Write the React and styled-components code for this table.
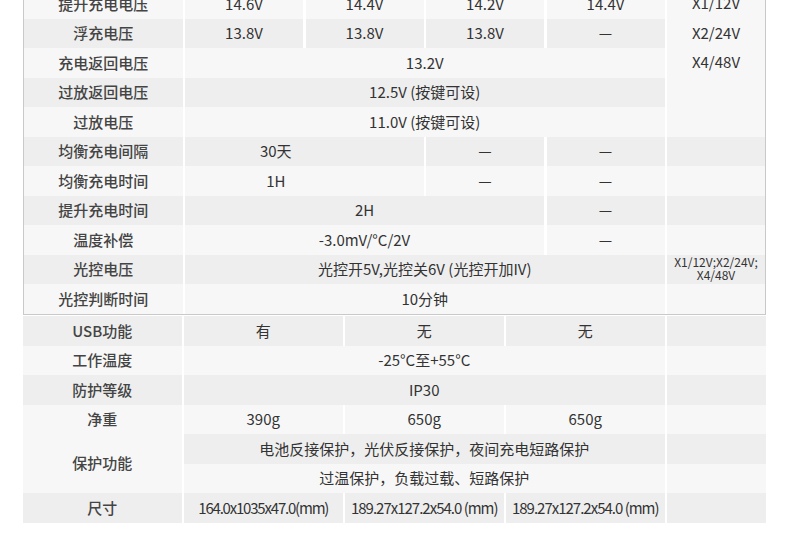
import styled, { createGlobalStyle } from "styled-components";

const GRAY = "#eeeeee";
const LIGHT = "#f7f7f7";

const GlobalStyle = createGlobalStyle`
  html, body {
    margin: 0;
    padding: 0;
    background: #ffffff;
  }
  body {
    font-family: "Noto Sans CJK SC", "Noto Sans", sans-serif;
    font-size: 15px;
    color: #333;
    overflow: hidden;
  }
`;

const Page = styled.div`
  width: 743px;
  margin: -11px 0 0 23px;
`;

const UpperBox = styled.div`
  border: 1px solid #c9c9c9;
  border-top: none;
`;

const Grid = styled.div`
  display: grid;
  grid-template-columns: ${(p) => p.$cols};
  grid-auto-rows: 29.5px;
  column-gap: 2.5px;
`;

const LowerGrid = styled(Grid)`
  margin-top: 1.5px;
`;

const Cell = styled.div`
  display: flex;
  align-items: center;
  justify-content: center;
  text-align: center;
  white-space: nowrap;
  background: ${(p) => (p.$shade ? GRAY : LIGHT)};
  grid-column: ${(p) => (p.$col ? p.$col : "auto")};
  grid-row: ${(p) => (p.$row ? p.$row : "auto")};
  padding-right: ${(p) => p.$shift || 0}px;
  padding-bottom: 1.5px;
  line-height: 1;
`;

const Label = styled(Cell)`
  color: #444;
  font-weight: 500;
`;

const Size = styled(Cell)`
  letter-spacing: ${(p) => (p.$tight ? "-1.2px" : "-1px")};
`;

const ModelStack = styled.div`
  grid-column: 6;
  grid-row: 1 / span 5;
  background: ${LIGHT};
  text-align: center;
  line-height: 29.5px;
  margin-top: -1px;
  color: #333;
`;

const Small = styled(Cell)`
  flex-direction: column;
  font-size: 12px;
  line-height: 12.5px;
  padding-bottom: 1px;
`;

function UpperTable() {
  return (
    <UpperBox>
      <Grid $cols="158.5px repeat(4, 118px) 1fr">
        <Label>提升充电电压</Label>
        <Cell>14.6V</Cell>
        <Cell>14.4V</Cell>
        <Cell>14.2V</Cell>
        <Cell>14.4V</Cell>
        <ModelStack>
          <div>X1/12V</div>
          <div>X2/24V</div>
          <div>X4/48V</div>
        </ModelStack>

        <Label $shade>浮充电压</Label>
        <Cell $shade>13.8V</Cell>
        <Cell $shade>13.8V</Cell>
        <Cell $shade>13.8V</Cell>
        <Cell $shade>—</Cell>

        <Label>充电返回电压</Label>
        <Cell $col="2 / span 4">13.2V</Cell>

        <Label $shade>过放返回电压</Label>
        <Cell $shade $col="2 / span 4">12.5V (按键可设)</Cell>

        <Label>过放电压</Label>
        <Cell $col="2 / span 4">11.0V (按键可设)</Cell>

        <Label $shade>均衡充电间隔</Label>
        <Cell $shade $col="2 / span 2" $shift={57}>30天</Cell>
        <Cell $shade>—</Cell>
        <Cell $shade>—</Cell>
        <Cell $shade />

        <Label>均衡充电时间</Label>
        <Cell $col="2 / span 2" $shift={57}>1H</Cell>
        <Cell>—</Cell>
        <Cell>—</Cell>
        <Cell />

        <Label $shade>提升充电时间</Label>
        <Cell $shade $col="2 / span 3">2H</Cell>
        <Cell $shade>—</Cell>
        <Cell $shade />

        <Label>温度补偿</Label>
        <Cell $col="2 / span 3">-3.0mV/°C/2V</Cell>
        <Cell>—</Cell>
        <Cell />

        <Label $shade>光控电压</Label>
        <Cell $shade $col="2 / span 4">光控开5V,光控关6V (光控开加IV)</Cell>
        <Small $shade>
          <span>X1/12V;X2/24V;</span>
          <span>X4/48V</span>
        </Small>

        <Label>光控判断时间</Label>
        <Cell $col="2 / span 4">10分钟</Cell>
        <Cell />
      </Grid>
    </UpperBox>
  );
}

function LowerTable() {
  return (
    <LowerGrid $cols="158.5px repeat(3, 158.5px) 1fr">
      <Label $shade>USB功能</Label>
      <Cell $shade>有</Cell>
      <Cell $shade>无</Cell>
      <Cell $shade>无</Cell>
      <Cell $shade />

      <Label>工作温度</Label>
      <Cell $col="2 / span 3">-25°C至+55°C</Cell>
      <Cell />

      <Label $shade>防护等级</Label>
      <Cell $shade $col="2 / span 3">IP30</Cell>
      <Cell $shade />

      <Label>净重</Label>
      <Cell>390g</Cell>
      <Cell>650g</Cell>
      <Cell>650g</Cell>
      <Cell />

      <Label $row="span 2">保护功能</Label>
      <Cell $shade $col="2 / span 3">电池反接保护，光伏反接保护，夜间充电短路保护</Cell>
      <Cell $shade />
      <Cell $col="2 / span 3">过温保护，负载过载、短路保护</Cell>
      <Cell />

      <Label $shade>尺寸</Label>
      <Size $shade $tight>164.0x1035x47.0(mm)</Size>
      <Size $shade>189.27x127.2x54.0 (mm)</Size>
      <Size $shade>189.27x127.2x54.0 (mm)</Size>
      <Cell $shade />
    </LowerGrid>
  );
}

export default function App() {
  return (
    <>
      <GlobalStyle />
      <Page>
        <UpperTable />
        <LowerTable />
      </Page>
    </>
  );
}
